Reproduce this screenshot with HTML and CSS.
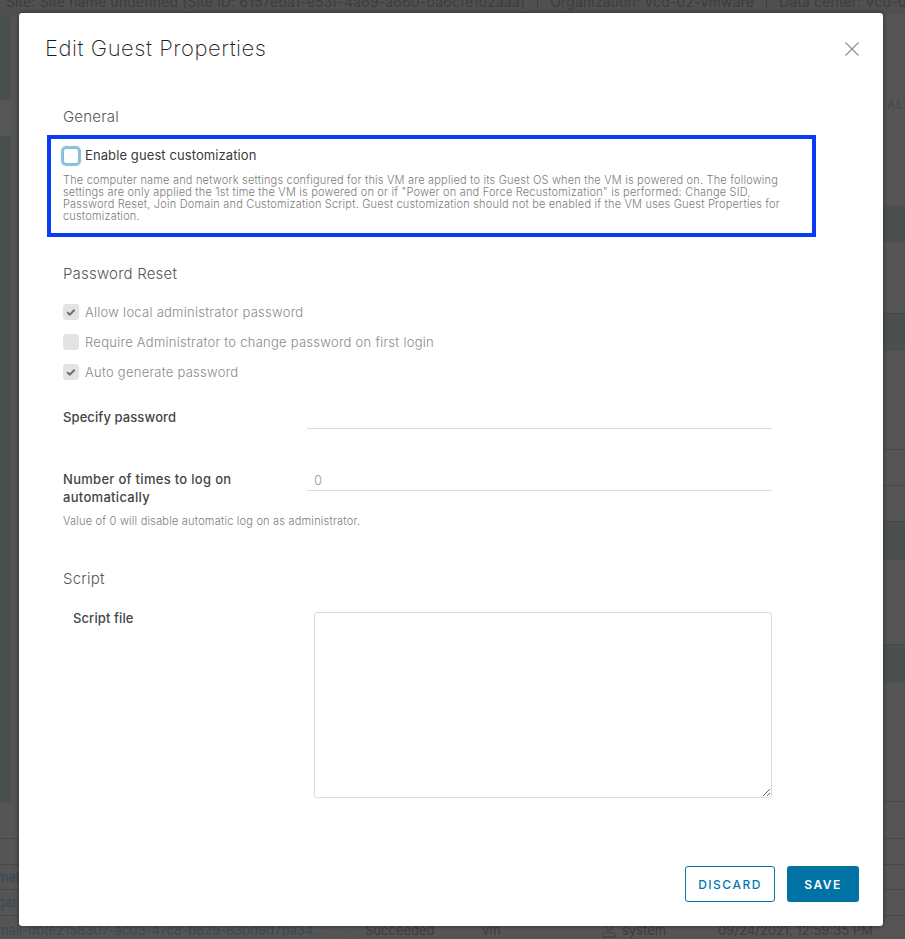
FILE: index.html
```html
<!DOCTYPE html>
<html lang="en">
<head>
  <meta charset="UTF-8" />
  <title>Edit Guest Properties</title>
  <link rel="stylesheet" href="styles.css">
</head>
<body>

  <!-- page behind the dialog -->
  <div class="backdrop">
    <div class="site-bar">
      Site: Site name undefined (Site ID: 6157eba1-e53f-4a69-a660-ba6cfe1b2aaa)
      <span class="site-sep"></span> Organization: Vcd-02-vmware
      <span class="site-sep"></span> Data center: Vcd-02
    </div>
    <div class="page-mid">
      <div class="side-nav">
        <div class="side-green side-a"></div>
        <div class="side-light"></div>
        <div class="side-green side-b"></div>
      </div>
      <div class="bands">
        <div class="band band-85"></div>
        <div class="band band-22 all-row"><span class="all-link">ALL</span></div>
        <div class="band band-83"></div>
        <div class="band band-37 green"></div>
        <div class="band band-37"></div>
        <div class="band band-35 line"></div>
        <div class="band band-37 green"></div>
        <div class="band band-37"></div>
        <div class="band band-62 line"></div>
        <div class="band band-36 line"></div>
        <div class="band band-36 line"></div>
        <div class="band band-38 green"></div>
        <div class="band band-36"></div>
        <div class="band band-49 line"></div>
        <div class="band band-38 green"></div>
        <div class="band band-35"></div>
        <div class="band band-84 line"></div>
      </div>
    </div>
    <div class="task-row task-37"></div>
    <div class="task-row task-26"></div>
    <div class="task-row task-25"><span class="task-name">mall</span></div>
    <div class="task-row task-26"><span class="task-name">gar</span></div>
    <div class="task-row task-last">
      <span class="task-name task-full">mall-db(e2158307-ac03-47c8-b829-63bd9d7ba34...</span>
      <svg class="ok-icon" viewBox="0 0 14 14" width="14" height="14">
        <circle cx="7" cy="7" r="6.5" fill="none" stroke="#3f5a35" stroke-width="1" />
        <path d="M3.5 7.2l2.4 2.4 4.6-5" fill="none" stroke="#3f5a35" stroke-width="1" />
      </svg>
      <span class="task-status">Succeeded</span>
      <span class="task-type">vm</span>
      <svg class="user-icon" viewBox="0 0 14 16" width="14" height="16">
        <circle cx="7" cy="5" r="3" fill="none" stroke="#3d3d3d" stroke-width="1" />
        <path d="M1 15v-2.5c0-1.5 2.5-2.5 6-2.5s6 1 6 2.5V15z" fill="none" stroke="#3d3d3d" stroke-width="1" />
      </svg>
      <span class="task-user">system</span>
      <span class="task-date">09/24/2021, 12:59:35 PM</span>
    </div>
  </div>

  <!-- dialog -->
  <div class="modal">
    <div class="modal-head">
      <h1>Edit Guest Properties</h1>
      <svg class="close-icon" viewBox="0 0 14 14" width="14" height="14">
        <path d="M0.5 0.5L13.5 13.5M13.5 0.5L0.5 13.5" stroke="#8c8c8c" stroke-width="1.1" fill="none" />
      </svg>
    </div>

    <h2 class="section-title general-title">General</h2>
    <div class="callout">
      <div class="check-row enable-row">
        <span class="check focus"></span>
        <span class="enable-label">Enable guest customization</span>
      </div>
      <p class="callout-text">The computer name and network settings configured for this VM are applied to its Guest OS when the VM is powered on. The following settings are only applied the 1st time the VM is powered on or if "Power on and Force Recustomization" is performed: Change SID, Password Reset, Join Domain and Customization Script. Guest customization should not be enabled if the VM uses Guest Properties for customization.</p>
    </div>

    <h2 class="section-title password-title">Password Reset</h2>
    <div class="check-list">
      <div class="check-row">
        <span class="check">
          <svg viewBox="0 0 16 16" width="16" height="16"><path d="M4.2 8.2l2.6 2.5 4.8-5" fill="none" stroke="#6f6f6f" stroke-width="2" /></svg>
        </span>
        <span class="check-label">Allow local administrator password</span>
      </div>
      <div class="check-row">
        <span class="check"></span>
        <span class="check-label">Require Administrator to change password on first login</span>
      </div>
      <div class="check-row">
        <span class="check">
          <svg viewBox="0 0 16 16" width="16" height="16"><path d="M4.2 8.2l2.6 2.5 4.8-5" fill="none" stroke="#6f6f6f" stroke-width="2" /></svg>
        </span>
        <span class="check-label">Auto generate password</span>
      </div>
    </div>

    <div class="field field-password">
      <label class="field-label">Specify password</label>
      <input class="field-input" type="text" />
    </div>
    <div class="field field-times">
      <label class="field-label">Number of times to log on automatically</label>
      <input class="field-input" type="text" value="0" />
    </div>
    <p class="field-hint">Value of 0 will disable automatic log on as administrator.</p>

    <h2 class="section-title script-title">Script</h2>
    <div class="field field-script">
      <label class="field-label">Script file</label>
      <textarea class="script-area"></textarea>
    </div>

    <div class="modal-foot">
      <button class="btn btn-outline">DISCARD</button>
      <button class="btn btn-solid">SAVE</button>
    </div>
  </div>

</body>
</html>
```

FILE: styles.css
```css
* {
  box-sizing: border-box;
}

html, body {
  margin: 0;
  padding: 0;
  height: 939px;
  overflow: hidden;
}

body {
  font-family: 'Inter', 'Liberation Sans', sans-serif;
  background-color: #555555;
  position: relative;
}

/* page behind the dialog */
.backdrop {
  height: 939px;
  display: flex;
  flex-direction: column;
  overflow: hidden;
  color: #3d3d3d;
}

.site-bar {
  height: 26px;
  flex: none;
  margin-top: -11px;
  padding: 0 0 0 6px;
  font-size: 14px;
  line-height: 20px;
  letter-spacing: 0.12px;
  white-space: nowrap;
  background-color: #505050;
}

.site-sep {
  display: inline-block;
  width: 1px;
  height: 18px;
  margin: 0 8px;
  background-color: #3d3d3d;
}

.page-mid {
  display: flex;
  flex: none;
  height: 787px;
}

.side-nav {
  width: 11px;
  flex: none;
  display: flex;
  flex-direction: column;
}

.side-green {
  background-color: #4a514c;
}

.side-a {
  height: 85px;
}

.side-light {
  height: 36px;
  background-color: #565656;
}

.side-b {
  flex: 1;
}

.bands {
  flex: 1;
  margin-left: 8px;
  display: flex;
  flex-direction: column;
}

.band {
  flex: none;
}

.band.green {
  background-color: #4a514c;
}

.band.line {
  border-bottom: 1px solid #484848;
}

.band-22 { height: 22px; }
.band-35 { height: 35px; }
.band-36 { height: 36px; }
.band-37 { height: 37px; }
.band-38 { height: 38px; }
.band-49 { height: 49px; }
.band-62 { height: 62px; }
.band-83 { height: 83px; }
.band-84 { height: 84px; }
.band-85 { height: 85px; }

.all-row {
  text-align: right;
  overflow: hidden;
}

.all-link {
  display: block;
  width: 18px;
  margin-left: auto;
  font-size: 12px;
  line-height: 9px;
  letter-spacing: 1px;
  color: #384a52;
  text-align: left;
  white-space: nowrap;
  overflow: hidden;
}

.task-row {
  flex: none;
  font-size: 13px;
  border-bottom: 1px solid #484848;
}

.task-25 {
  height: 25px;
  line-height: 24px;
}

.task-26 {
  height: 26px;
  line-height: 24px;
}

.task-37 {
  height: 37px;
}

.task-last {
  flex: 1;
  display: flex;
  align-items: flex-start;
  line-height: 28px;
  white-space: nowrap;
  border-bottom: 0;
}

.task-name {
  display: block;
  margin-left: -3px;
  color: #384a52;
}

.task-full {
  width: 348px;
  flex: none;
  overflow: hidden;
}

.ok-icon {
  margin-top: 7px;
  margin-right: 6px;
  flex: none;
}

.task-status {
  width: 117px;
  flex: none;
}

.task-type {
  width: 120px;
  flex: none;
}

.user-icon {
  margin-top: 6px;
  margin-right: 6px;
  flex: none;
}

.task-user {
  width: 96px;
  flex: none;
}

/* dialog */
.modal {
  position: absolute;
  left: 19px;
  top: 13px;
  width: 864px;
  height: 913px;
  background-color: white;
  border-radius: 3px;
  box-shadow: 0 0 4px rgba(0, 0, 0, 0.5);
  padding: 0 24px 0 28px;
  color: #454545;
  display: flex;
  flex-direction: column;
}

.modal-head {
  display: flex;
  justify-content: space-between;
  align-items: center;
  height: 30px;
  margin-top: 21px;
}

.modal-head h1 {
  margin: 0 0 2px -2px;
  font-size: 22px;
  font-weight: 200;
  color: #1c1c1c;
  letter-spacing: 0.55px;
}

.section-title {
  margin: 0 0 0 16px;
  font-size: 15px;
  font-weight: 300;
  line-height: 18px;
  color: #575757;
  letter-spacing: 0.2px;
}

.general-title {
  margin-top: 44px;
}

.password-title {
  margin-top: 28px;
}

.script-title {
  margin-top: 42px;
}

.callout {
  width: 769px;
  height: 102px;
  margin-top: 9px;
  border: 4px solid #0a3cf5;
  padding: 9px 12px 0 12px;
}

.check-row {
  display: flex;
  align-items: center;
  gap: 6px;
  height: 16px;
}

.check {
  display: block;
  flex: none;
  width: 16px;
  height: 16px;
  border-radius: 3px;
  background-color: #e3e3e3;
}

.check svg {
  display: block;
}

.check.focus {
  background-color: white;
  border: 1px solid #9ab4c2;
  box-shadow: 0 0 1px 2px #7cc4e8;
}

.enable-label {
  font-size: 13px;
  line-height: 14px;
  margin-bottom: 2px;
  color: #3a3a3a;
  letter-spacing: 0.1px;
}

.callout-text {
  width: 722px;
  margin: 10px 0 0 0;
  font-size: 11px;
  line-height: 12px;
  font-weight: 300;
  color: #7c7c7c;
  letter-spacing: 0.19px;
}

.check-list {
  margin: 21px 0 0 16px;
  display: flex;
  flex-direction: column;
  gap: 14px;
}

.check-label {
  font-size: 13px;
  font-weight: 300;
  color: #8a8a8a;
  letter-spacing: 0.26px;
}

.field {
  display: flex;
  margin-left: 16px;
}

.field-label {
  display: block;
  width: 244px;
  flex: none;
  font-size: 13px;
  font-weight: 500;
  line-height: 18px;
  color: #454545;
  letter-spacing: 0.1px;
}

.field-input {
  width: 465px;
  height: 21px;
  border: 0;
  border-bottom: 1px solid #dcdcdc;
  padding: 0 7px;
  font-family: inherit;
  font-size: 13px;
  font-weight: 300;
  color: #9a9a9a;
  outline: none;
}

.field-password {
  margin-top: 28px;
  height: 44px;
}

.field-times {
  margin-top: 18px;
}

.field-times .field-label {
  width: 190px;
  margin-right: 54px;
  letter-spacing: 0.3px;
}

.field-hint {
  margin: 8px 0 0 16px;
  font-size: 11px;
  line-height: 14px;
  font-weight: 300;
  color: #7c7c7c;
  letter-spacing: 0.2px;
}

.field-script {
  margin-top: 21px;
  margin-left: 26px;
}

.field-script .field-label {
  width: 241px;
}

.script-area {
  width: 458px;
  height: 186px;
  margin-top: 3px;
  border: 1px solid #dcdcdc;
  border-radius: 3px;
  resize: both;
  outline: none;
  background-color: white;
}

.modal-foot {
  display: flex;
  justify-content: flex-end;
  gap: 12px;
  margin-top: 68px;
}

.btn {
  height: 36px;
  border-radius: 3px;
  font-family: inherit;
  font-size: 12px;
  font-weight: 600;
  letter-spacing: 1.5px;
  cursor: pointer;
}

.btn-outline {
  width: 90px;
  background-color: white;
  border: 1px solid #0079ad;
  color: #0079ad;
  font-weight: 500;
}

.btn-solid {
  width: 72px;
  background-color: #0072a3;
  border: none;
  color: white;
}
```
